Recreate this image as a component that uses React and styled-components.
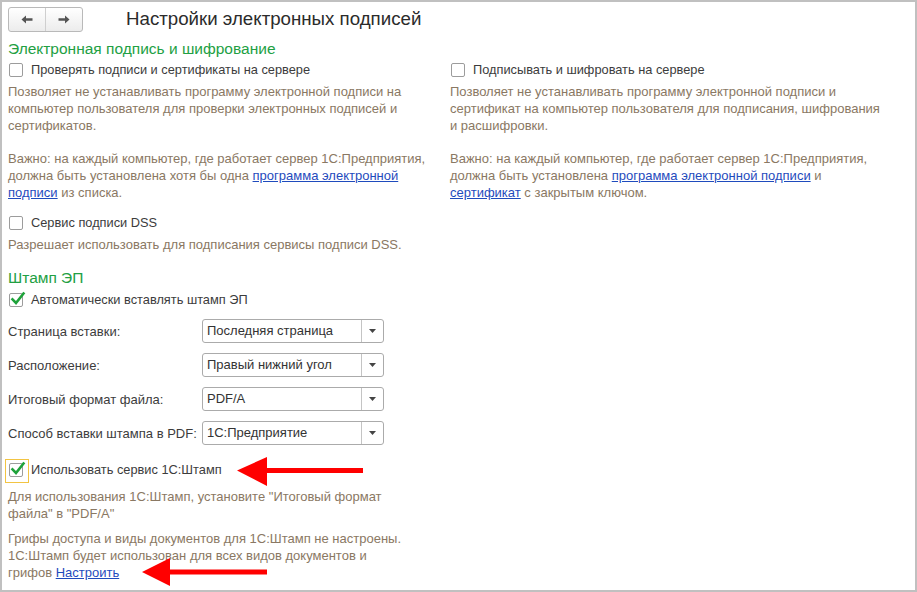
import React from "react";
import styled, { createGlobalStyle } from "styled-components";

const Global = createGlobalStyle`
  html, body {
    margin: 0;
    padding: 0;
    background: #fff;
  }
  body {
    font-family: "Liberation Sans", Arial, sans-serif;
    font-size: 13px;
    color: #404040;
  }
`;

const Frame = styled.div`
  position: relative;
  width: 917px;
  height: 592px;
  box-sizing: border-box;
  border: 2px solid #c0c0c0;
  background: #fff;
  padding: 0 6px;
  overflow: hidden;
`;

const Header = styled.div`
  display: flex;
  align-items: center;
  height: 30px;
  padding-top: 4px;
  box-sizing: border-box;
`;

const NavGroup = styled.div`
  display: flex;
  height: 25px;
  box-sizing: border-box;
  border: 1px solid #b9b9b9;
  border-radius: 3px;
  background: linear-gradient(#ffffff, #ececec);
  overflow: hidden;
`;

const NavButton = styled.div`
  width: 36px;
  display: flex;
  align-items: center;
  justify-content: center;
  border-left: ${(p) => (p.$divider ? "1px solid #cfcfcf" : "none")};
`;

const Title = styled.h1`
  margin: 0 0 0 43px;
  font-size: 18.7px;
  font-weight: normal;
  color: #2b2b2b;
  line-height: 22px;
`;

const GroupTitle = styled.div`
  margin-top: ${(p) => p.$mt}px;
  font-size: 15.5px;
  line-height: 18px;
  color: #22a043;
`;

const Columns = styled.div`
  display: grid;
  grid-template-columns: 442px 1fr;
`;

const Column = styled.div`
  display: flex;
  flex-direction: column;
`;

const CheckRow = styled.label`
  display: flex;
  align-items: center;
  height: 18px;
  margin-top: ${(p) => p.$mt || 0}px;
  padding-left: 1px;
  color: #3c3c3c;
  font-size: 12.8px;
  line-height: 18px;
`;

const Box = styled.span`
  position: relative;
  width: 14px;
  height: 14px;
  box-sizing: border-box;
  border: 1px solid #9c9c9c;
  border-radius: 2px;
  background: #fff;
  margin-right: 8px;
  flex: none;

  &::after {
    content: "";
    display: ${(p) => (p.$focus ? "block" : "none")};
    position: absolute;
    left: -5px;
    top: -5px;
    width: 22px;
    height: 22px;
    border: 1px solid #f2c443;
  }

  svg {
    position: absolute;
    left: 0px;
    top: -3px;
  }
`;

const Desc = styled.div`
  margin-top: ${(p) => p.$mt || 0}px;
  color: #8a7863;
  line-height: 17px;
  white-space: nowrap;
`;

const A = styled.a`
  color: #1f4bbd;
  text-decoration: underline;
`;

const FieldRow = styled.div`
  display: flex;
  align-items: center;
  height: 24px;
  margin-top: ${(p) => p.$mt}px;
`;

const FieldLabel = styled.div`
  width: 194px;
  color: #3c3c3c;
  white-space: nowrap;
`;

const Select = styled.div`
  width: 182px;
  height: 24px;
  box-sizing: border-box;
  border: 1px solid #ababab;
  border-radius: 3px;
  display: flex;
  background: #fff;
`;

const SelectValue = styled.div`
  flex: 1;
  padding-left: 4px;
  line-height: 22px;
  color: #333;
  font-size: 13px;
`;

const SelectButton = styled.div`
  width: 21px;
  border-left: 1px solid #c4c4c4;
  display: flex;
  align-items: center;
  justify-content: center;
`;

const Annotations = styled.svg`
  position: absolute;
  left: -2px;
  top: -2px;
  pointer-events: none;
`;

const Check = () => (
  <svg width="16" height="16" viewBox="0 0 16 16">
    <path d="M2.5 8.3 L6 12 L13.5 2.5" fill="none" stroke="#1ea23a" strokeWidth="2.6" strokeLinecap="square" />
  </svg>
);

const CheckBox = ({ checked, focus, mt, children }) => (
  <CheckRow $mt={mt}>
    <Box $focus={focus}>{checked && <Check />}</Box>
    {children}
  </CheckRow>
);

const Arrow = ({ dir }) => (
  <svg width="12" height="9" viewBox="0 0 12 9">
    {dir === "left" ? (
      <path d="M0.5 4.5 L5 0.5 L5 3.2 L11.5 3.2 L11.5 5.8 L5 5.8 L5 8.5 Z" fill="#555" />
    ) : (
      <path d="M11.5 4.5 L7 0.5 L7 3.2 L0.5 3.2 L0.5 5.8 L7 5.8 L7 8.5 Z" fill="#555" />
    )}
  </svg>
);

const Field = ({ label, value, mt }) => (
  <FieldRow $mt={mt}>
    <FieldLabel>{label}</FieldLabel>
    <Select>
      <SelectValue>{value}</SelectValue>
      <SelectButton>
        <svg width="7" height="4" viewBox="0 0 7 4">
          <path d="M0 0 L7 0 L3.5 4 Z" fill="#444" />
        </svg>
      </SelectButton>
    </Select>
  </FieldRow>
);

export default function App() {
  return (
    <>
      <Global />
      <Frame>
        <Header>
          <NavGroup>
            <NavButton>
              <Arrow dir="left" />
            </NavButton>
            <NavButton $divider>
              <Arrow dir="right" />
            </NavButton>
          </NavGroup>
          <Title>Настройки электронных подписей</Title>
        </Header>

        <GroupTitle $mt={8}>Электронная подпись и шифрование</GroupTitle>
        <Columns>
          <Column>
            <CheckBox mt={3}>Проверять подписи и сертификаты на сервере</CheckBox>
            <Desc $mt={4}>
              Позволяет не устанавливать программу электронной подписи на
              <br />
              компьютер пользователя для проверки электронных подписей и
              <br />
              сертификатов.
            </Desc>
            <Desc $mt={16}>
              Важно: на каждый компьютер, где работает сервер 1С:Предприятия,
              <br />
              должна быть установлена хотя бы одна <A>программа электронной</A>
              <br />
              <A>подписи</A> из списка.
            </Desc>
            <CheckBox mt={13}>Сервис подписи DSS</CheckBox>
            <Desc $mt={4}>Разрешает использовать для подписания сервисы подписи DSS.</Desc>
          </Column>
          <Column>
            <CheckBox mt={3}>Подписывать и шифровать на сервере</CheckBox>
            <Desc $mt={4}>
              Позволяет не устанавливать программу электронной подписи и
              <br />
              сертификат на компьютер пользователя для подписания, шифрования
              <br />
              и расшифровки.
            </Desc>
            <Desc $mt={16}>
              Важно: на каждый компьютер, где работает сервер 1С:Предприятия,
              <br />
              должна быть установлена <A>программа электронной подписи</A> и
              <br />
              <A>сертификат</A> с закрытым ключом.
            </Desc>
          </Column>
        </Columns>

        <GroupTitle $mt={16}>Штамп ЭП</GroupTitle>
        <CheckBox checked mt={4}>Автоматически вставлять штамп ЭП</CheckBox>
        <Field mt={10} label="Страница вставки:" value="Последняя страница" />
        <Field mt={10} label="Расположение:" value="Правый нижний угол" />
        <Field mt={10} label="Итоговый формат файла:" value="PDF/A" />
        <Field mt={10} label="Способ вставки штампа в PDF:" value="1С:Предприятие" />

        <CheckBox checked focus mt={16}>Использовать сервис 1С:Штамп</CheckBox>
        <Desc $mt={9}>
          Для использования 1С:Штамп, установите "Итоговый формат
          <br />
          файла" в "PDF/A"
        </Desc>
        <Desc $mt={8}>
          Грифы доступа и виды документов для 1С:Штамп не настроены.
          <br />
          1С:Штамп будет использован для всех видов документов и
          <br />
          грифов <A>Настроить</A>
        </Desc>

        <Annotations width="917" height="592" viewBox="0 0 917 592">
          <path d="M237 470.5 L267 457 L267 468 L363 468 L363 473 L267 473 L267 486 Z" fill="#ff0000" />
          <path d="M142 572 L170 558 L170 569.5 L267 569.5 L267 574.5 L170 574.5 L170 586 Z" fill="#ff0000" />
        </Annotations>
      </Frame>
    </>
  );
}
